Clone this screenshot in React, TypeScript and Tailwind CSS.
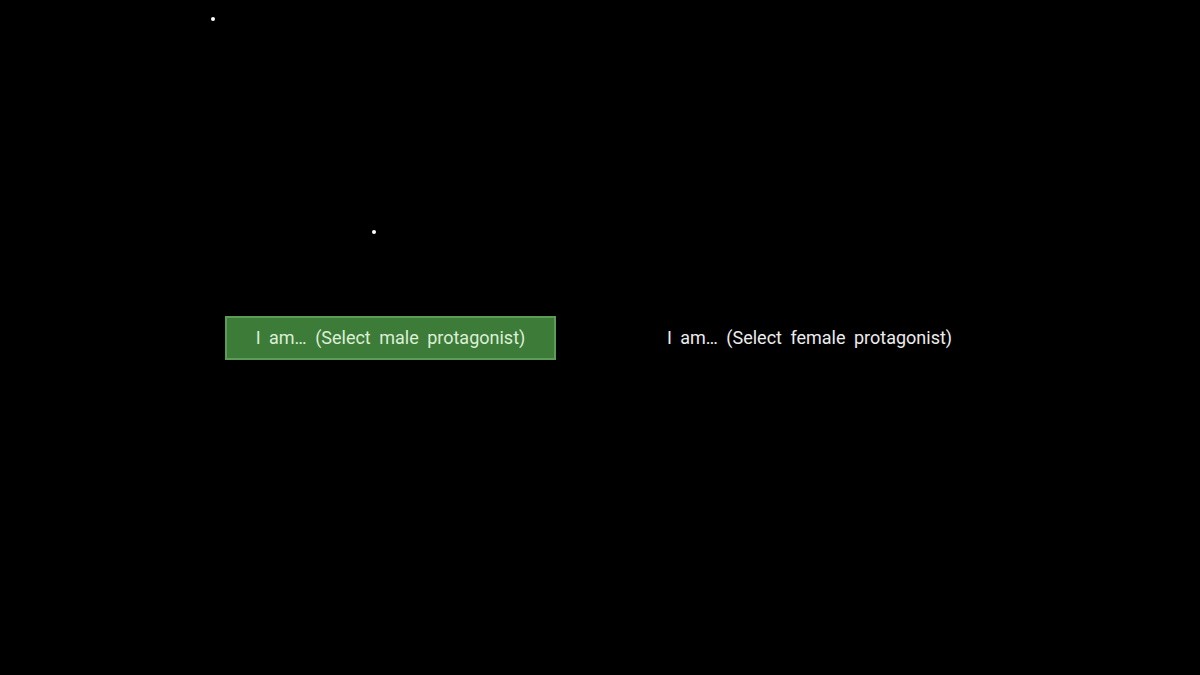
export default function App() {
  return (
    <div className="relative w-[1200px] h-[675px] bg-black overflow-hidden" style={{ fontFamily: "Roboto, 'Liberation Sans', sans-serif" }}>
      <div className="absolute left-[211px] top-[17px] w-[4px] h-[4px] rounded-full bg-white" />
      <div className="absolute left-[372px] top-[230px] w-[4px] h-[4px] rounded-full bg-white" />
      <div className="flex h-full items-center justify-center gap-[88px]">
        <div className="w-[331px] h-[44px] flex items-center justify-center border-2 border-[#5c9c56] bg-[#3d7b39] text-[#dcefd6] text-[18px] [word-spacing:4px]">
          I am… (Select male protagonist)
        </div>
        <div className="w-[331px] h-[44px] flex items-center justify-center text-[#ececec] text-[18px] [word-spacing:4px]">
          I am… (Select female protagonist)
        </div>
      </div>
    </div>
  );
}
